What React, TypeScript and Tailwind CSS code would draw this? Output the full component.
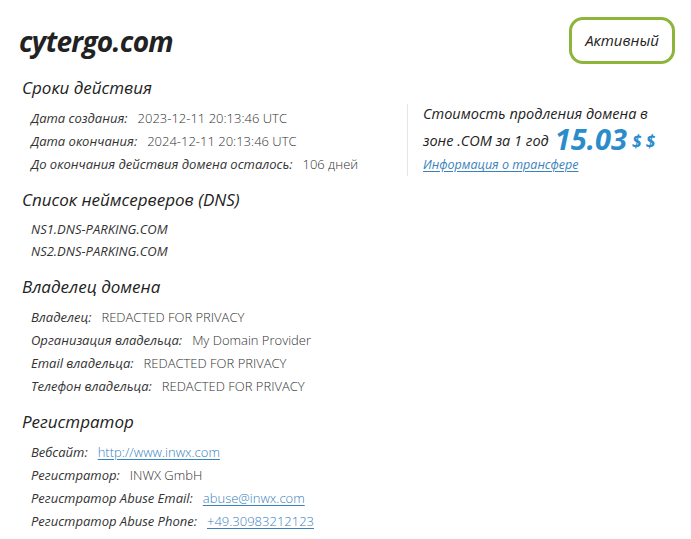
import React from 'react';

type Row = { label: string; value: string; href?: boolean };

const font = { fontFamily: '"Open Sans", "Noto Sans", sans-serif' };

function Section({ title, rows, rowH = 'h-[23px]', children }: { title: string; rows: Row[]; rowH?: string; children?: React.ReactNode }) {
  return (
    <div className="mt-[12px]">
      <h2 className="h-[24px] flex items-center pl-[3px] text-[17px] italic font-medium text-[#222]">{title}</h2>
      <div className="mt-[7px] flex">
        <div className="flex flex-col">
          {rows.map((r, i) => (
            <div key={i} className={`${rowH} flex items-center pl-[12px] text-[13px]`}>
              {r.label && <span className="italic text-[#333] mr-[10px]">{r.label}</span>}
              {r.href ? (
                <a className="text-[#3a82bd] underline underline-offset-2 font-light" href="#">{r.value}</a>
              ) : (
                <span className={r.label ? 'text-[#333] font-light' : 'italic text-[#333]'}>{r.value}</span>
              )}
            </div>
          ))}
        </div>
        {children}
      </div>
    </div>
  );
}

export default function App() {
  return (
    <div className="min-h-screen bg-white text-[#222] pt-[17px] pl-[19px] pr-[16px]" style={font}>
      {/* Header */}
      <div className="flex items-center justify-between h-[47px]">
        <h1 className="text-[28px] font-bold italic text-[#222] tracking-tight">cytergo.com</h1>
        <div className="h-[47px] w-[106px] flex items-center justify-center rounded-[14px] border-[3px] border-[#8db53c] text-[15px] italic font-medium text-[#222]">
          Активный
        </div>
      </div>

      <div className="mt-[1px]">
        <Section
          title="Сроки действия"
          rows={[
            { label: 'Дата создания:', value: '2023-12-11 20:13:46 UTC' },
            { label: 'Дата окончания:', value: '2024-12-11 20:13:46 UTC' },
            { label: 'До окончания действия домена осталось:', value: '106 дней' },
          ]}
        >
          {/* Renewal price */}
          <div className="ml-auto mr-[13px] -mt-[3px] h-[72px] w-[255px] border-l border-[#e6e6e6] pl-[15px] text-[14.5px] italic font-medium text-[#222]">
            <div className="h-[20px] leading-[20px] whitespace-nowrap">Стоимость продления домена в</div>
            <div className="h-[28px] flex items-end whitespace-nowrap">
              <span className="leading-[20px] mb-[1px]">зоне .COM за 1 год</span>
              <span className="ml-[6px] text-[29px] leading-[26px] font-bold text-[#2b8ccc]">15.03</span>
              <span className="ml-[5px] text-[17px] leading-[20px] font-bold text-[#2b8ccc]">$ $</span>
            </div>
            <a href="#" className="block mt-[4px] text-[12.5px] font-medium text-[#3a82bd] underline underline-offset-2">Информация о трансфере</a>
          </div>
        </Section>

        <Section
          title="Список неймсерверов (DNS)"
          rowH="h-[22px]"
          rows={[
            { label: '', value: 'NS1.DNS-PARKING.COM' },
            { label: '', value: 'NS2.DNS-PARKING.COM' },
          ]}
        />

        <Section
          title="Владелец домена"
          rows={[
            { label: 'Владелец:', value: 'REDACTED FOR PRIVACY' },
            { label: 'Организация владельца:', value: 'My Domain Provider' },
            { label: 'Email владельца:', value: 'REDACTED FOR PRIVACY' },
            { label: 'Телефон владельца:', value: 'REDACTED FOR PRIVACY' },
          ]}
        />

        <Section
          title="Регистратор"
          rows={[
            { label: 'Вебсайт:', value: 'http://www.inwx.com', href: true },
            { label: 'Регистратор:', value: 'INWX GmbH' },
            { label: 'Регистратор Abuse Email:', value: 'abuse@inwx.com', href: true },
            { label: 'Регистратор Abuse Phone:', value: '+49.30983212123', href: true },
          ]}
        />
      </div>
    </div>
  );
}
